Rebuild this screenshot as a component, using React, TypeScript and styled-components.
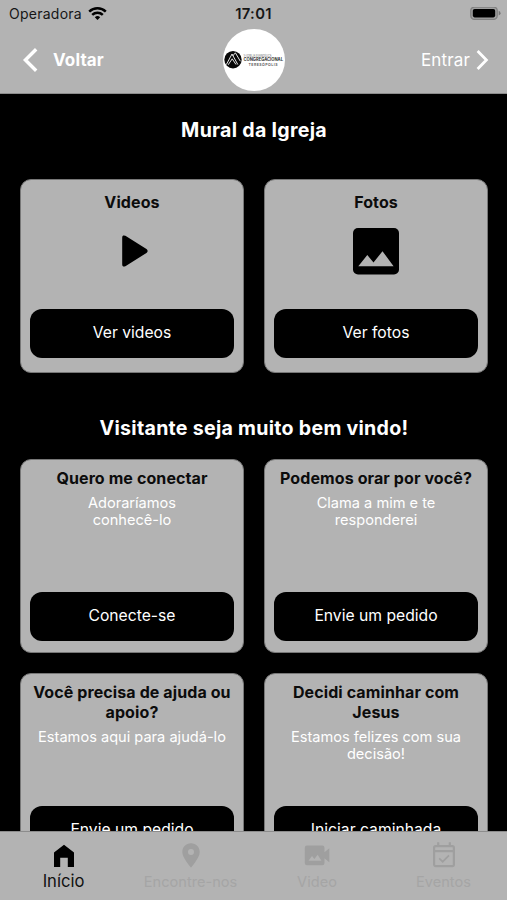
import React from "react";
import styled, { createGlobalStyle } from "styled-components";

const GREY = "#b3b3b3";

const GlobalStyle = createGlobalStyle`
  * { box-sizing: border-box; }
  html, body { margin: 0; padding: 0; background: #000; }
  body { font-family: Inter, "Liberation Sans", sans-serif; overflow: hidden; }
  svg { display: block; flex: none; }
`;

const Screen = styled.div`
  width: 507px;
  height: 900px;
  display: flex;
  flex-direction: column;
  overflow: hidden;
  background: #000;
`;

const Header = styled.header`
  height: 94px;
  flex: none;
  background: ${GREY};
  border-bottom: 1px solid #8c8c8c;
`;

const StatusBar = styled.div`
  height: 28px;
  display: grid;
  grid-template-columns: 1fr auto 1fr;
  align-items: center;
  padding: 0 6.5px;
  font-size: 14px;
  color: #161616;
`;

const Carrier = styled.div`
  display: flex;
  align-items: center;
  gap: 6px;
  padding: 0 0 1px 2.5px;
  letter-spacing: 0.25px;
`;

const Clock = styled.div`
  font-weight: 600;
  font-size: 14.8px;
  letter-spacing: 0.3px;
`;

const BatterySlot = styled.div`
  display: flex;
  justify-content: flex-end;
`;

const TopNav = styled.div`
  height: 63px;
  display: grid;
  grid-template-columns: 1fr 62px 1fr;
  align-items: center;
  padding: 0 18px;
`;

const NavAction = styled.div<{ $end?: boolean }>`
  display: flex;
  align-items: center;
  justify-content: ${(p) => (p.$end ? "flex-end" : "flex-start")};
  gap: ${(p) => (p.$end ? 6 : 14)}px;
  padding-left: ${(p) => (p.$end ? 0 : 4)}px;
  color: #fff;
  font-size: 17px;
  letter-spacing: ${(p) => (p.$end ? 0.15 : 0.15)}px;
  font-weight: ${(p) => (p.$end ? 400 : 700)};
`;

const Logo = styled.div`
  width: 62px;
  height: 62px;
  border-radius: 50%;
  background: #fff;
  display: flex;
  align-items: center;
  justify-content: center;
`;

const Content = styled.main`
  flex: 1;
  min-height: 0;
  overflow: hidden;
  padding: 0 19px 0 20px;
`;

const SectionTitle = styled.h2<{ $top: number; $bottom: number }>`
  margin: 0;
  padding: ${(p) => p.$top}px 0 ${(p) => p.$bottom}px;
  text-align: center;
  color: #fff;
  font-size: 19.6px;
  letter-spacing: 0.28px;
  line-height: 24px;
  font-weight: 700;
`;

const CardGrid = styled.div`
  display: grid;
  grid-template-columns: 224px 224px;
  column-gap: 20px;
  row-gap: 20px;
`;

const Card = styled.section<{ $media?: boolean }>`
  height: 194px;
  border: 1px solid #777;
  border-radius: 11px;
  background: ${GREY};
  padding: ${(p) => (p.$media ? "13px 9px 14px" : "9px 9px 11px")};
  display: flex;
  flex-direction: column;
  align-items: center;
  text-align: center;
`;

const CardTitle = styled.h3`
  margin: 0;
  font-size: 16px;
  letter-spacing: 0.1px;
  line-height: 19.5px;
  font-weight: 700;
  color: #0c0c0c;
`;

const CardText = styled.p<{ $width: number }>`
  margin: 6.5px 0 0;
  width: ${(p) => p.$width}px;
  font-size: 14.6px;
  line-height: 17px;
  color: #fff;
`;

const IconArea = styled.div`
  height: 76px;
  display: flex;
  align-items: center;
  justify-content: center;
`;

const CardButton = styled.button`
  margin-top: auto;
  flex: none;
  width: 204px;
  height: 49px;
  padding: 0 0 1px;
  border: 0;
  border-radius: 12px;
  background: #000;
  color: #fff;
  font: 400 15.7px/20px Inter, "Liberation Sans", sans-serif;
`;

const TabBar = styled.nav`
  height: 69px;
  flex: none;
  background: ${GREY};
  border-top: 1px solid #8c8c8c;
  display: grid;
  grid-template-columns: 127px 127px 126px 127px;
`;

const Tab = styled.div<{ $active?: boolean }>`
  display: flex;
  flex-direction: column;
  align-items: center;
  padding-top: 10px;
  color: ${(p) => (p.$active ? "#000" : "#9f9f9f")};
`;

const TabLabel = styled.span<{ $active?: boolean }>`
  margin-top: ${(p) => (p.$active ? 3 : 4)}px;
  font-size: ${(p) => (p.$active ? 16.6 : 14.6)}px;
  line-height: 20px;
  color: ${(p) => (p.$active ? "#111" : "#a5a5a5")};
`;

const WifiIcon = () => (
  <svg width="19" height="14" viewBox="0 0 19 14" fill="none" stroke="#000" strokeWidth="2.5">
    <path d="M1.2 4.6A12 12 0 0 1 17.8 4.6" />
    <path d="M4.2 7.8A7.7 7.7 0 0 1 14.8 7.8" />
    <path d="M6.8 10.3A4 4 0 0 1 12.2 10.3L9.5 13.1Z" fill="#000" stroke="none" />
  </svg>
);

const BatteryIcon = () => (
  <svg width="31" height="14" viewBox="0 0 31 14">
    <rect x="0.8" y="0" width="26.4" height="12.4" rx="3.6" fill="#a0a0a0" stroke="#808080" strokeWidth="1.3" />
    <rect x="2.8" y="2" width="22.4" height="8.4" rx="1.8" fill="#000" />
    <path d="M28.7 3.8Q30.6 4.7 30.6 6.2T28.7 8.6Z" fill="#777" />
  </svg>
);

const BackIcon = () => (
  <svg width="17" height="26" viewBox="0 0 17 26" fill="none" stroke="#fff" strokeWidth="3.4">
    <path d="M14.2 2.2L3.4 13L14.2 23.8" />
  </svg>
);

const ForwardIcon = () => (
  <svg width="13" height="22" viewBox="0 0 13 22" fill="none" stroke="#fff" strokeWidth="2.8">
    <path d="M1.6 2L10.4 11L1.6 20" />
  </svg>
);

const ChurchLogo = () => (
  <svg width="62" height="62" viewBox="0 0 62 62" fontFamily="Inter, sans-serif" fill="#333">
    <circle cx="10" cy="30.7" r="8.7" fill="#080808" />
    <path d="M3.4 35.5L9 25L14.8 35.5M9.7 27L12.4 23.8L17.3 32.2M5.2 35.8L9.2 29.8L13 35.5" fill="none" stroke="#fff" strokeWidth="0.9" />
    <text x="20.5" y="27.8" fontSize="2.8" textLength="28" lengthAdjust="spacingAndGlyphs" fill="#666">1ª IGREJA EVANGÉLICA</text>
    <text x="20.5" y="32.4" fontSize="4.8" fontWeight="700" textLength="39.5" lengthAdjust="spacingAndGlyphs">CONGREGACIONAL</text>
    <text x="25.5" y="36.8" fontSize="3.6" fontWeight="600" textLength="29" fill="#555">TERESÓPOLIS</text>
  </svg>
);

const PlayIcon = () => (
  <svg width="48" height="48" viewBox="0 0 48 48">
    <path d="M15 10.4V37.6Q15 39.4 17 38.5L38 25.3Q39.7 24 38 22.7L17 9.5Q15 8.6 15 10.4Z" stroke="#000" strokeWidth="1.6" />
  </svg>
);

const PhotoIcon = () => (
  <svg width="48" height="48" viewBox="0 0 48 48">
    <rect x="1" y="1" width="46" height="46.5" rx="5" />
    <path d="M6.3 39.3L15.3 28L21.5 35.5L30.5 24.2L41.6 39.3Z" fill={GREY} />
  </svg>
);

const HomeIcon = () => (
  <svg width="24" height="26" viewBox="0 0 24 26" fill="currentColor">
    <path d="M2 10.5L12 2.7L22 10.5V25H15.8V15.8H8.2V25H2Z" />
  </svg>
);

const PinIcon = () => (
  <svg width="24" height="26" viewBox="0 0 24 26" fill="currentColor" fillRule="evenodd">
    <path d="M12 1.3C7 1.3 3.3 5.1 3.3 10C3.3 16 12 25.6 12 25.6S20.7 16 20.7 10C20.7 5.1 17 1.3 12 1.3ZM12 7A3 3 0 1 1 12 13A3 3 0 1 1 12 7Z" />
  </svg>
);

const VideoIcon = () => (
  <svg width="26" height="26" viewBox="0 0 26 26" fill="currentColor">
    <path d="M3 3.6H18.3Q20.5 3.6 20.5 5.8V10.3L25.3 6.3V20.3L20.5 16.3V21.1Q20.5 23.3 18.3 23.3H3Q.8 23.3 .8 21.1V5.8Q.8 3.6 3 3.6Z" />
    <path d="M4.5 18.7L8 14.1L10.4 17L13.6 12.8L17.5 18.7Z" fill={GREY} />
  </svg>
);

const EventIcon = () => (
  <svg width="24" height="26" viewBox="0 0 24 26" fill="none" stroke="currentColor" strokeWidth="2.2">
    <rect x="2.1" y="4.1" width="19.8" height="20" rx="1.6" />
    <path d="M2 9.2H22M6.2 .3V4M17.8 .3V4" />
    <path d="M7.2 16.3L10.7 19.7L17 13.4" strokeWidth="1.7" />
  </svg>
);

const visitorCards = [
  { title: "Quero me conectar", text: "Adoraríamos conhecê-lo", width: 130, action: "Conecte-se" },
  { title: "Podemos orar por você?", text: "Clama a mim e te responderei", width: 150, action: "Envie um pedido" },
  { title: "Você precisa de ajuda ou apoio?", text: "Estamos aqui para ajudá-lo", width: 204, action: "Envie um pedido" },
  { title: "Decidi caminhar com Jesus", text: "Estamos felizes com sua decisão!", width: 190, action: "Iniciar caminhada" },
];

export default function App() {
  return (
    <>
      <GlobalStyle />
      <Screen>
        <Header>
          <StatusBar>
            <Carrier>Operadora<WifiIcon /></Carrier>
            <Clock>17:01</Clock>
            <BatterySlot><BatteryIcon /></BatterySlot>
          </StatusBar>
          <TopNav>
            <NavAction><BackIcon />Voltar</NavAction>
            <Logo><ChurchLogo /></Logo>
            <NavAction $end>Entrar<ForwardIcon /></NavAction>
          </TopNav>
        </Header>
        <Content>
          <SectionTitle $top={24} $bottom={37}>Mural da Igreja</SectionTitle>
          <CardGrid>
            <Card $media>
              <CardTitle>Videos</CardTitle>
              <IconArea><PlayIcon /></IconArea>
              <CardButton>Ver videos</CardButton>
            </Card>
            <Card $media>
              <CardTitle>Fotos</CardTitle>
              <IconArea><PhotoIcon /></IconArea>
              <CardButton>Ver fotos</CardButton>
            </Card>
          </CardGrid>
          <SectionTitle $top={43} $bottom={19}>Visitante seja muito bem vindo!</SectionTitle>
          <CardGrid>
            {visitorCards.map((card) => (
              <Card key={card.title}>
                <CardTitle>{card.title}</CardTitle>
                <CardText $width={card.width}>{card.text}</CardText>
                <CardButton>{card.action}</CardButton>
              </Card>
            ))}
          </CardGrid>
        </Content>
        <TabBar>
          <Tab $active><HomeIcon /><TabLabel $active>Início</TabLabel></Tab>
          <Tab><PinIcon /><TabLabel>Encontre-nos</TabLabel></Tab>
          <Tab><VideoIcon /><TabLabel>Video</TabLabel></Tab>
          <Tab><EventIcon /><TabLabel>Eventos</TabLabel></Tab>
        </TabBar>
      </Screen>
    </>
  );
}
